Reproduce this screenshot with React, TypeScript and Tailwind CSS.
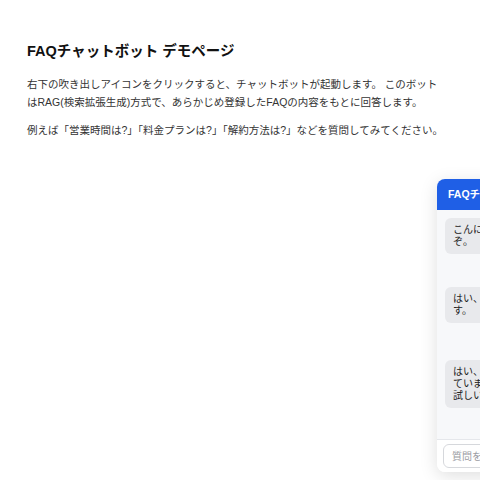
import React from "react";

const font = {
  fontFamily: '"Liberation Sans", "Noto Sans CJK JP", sans-serif',
};

type Msg = { lines: string[]; mt: string };

const messages: Msg[] = [
  { lines: ["こんにちは！FAQチャットボットです。ご質問をどう", "ぞ。"], mt: "mt-0" },
  { lines: ["はい、営業時間は平日10:00〜19:00で", "す。"], mt: "mt-[33px]" },
  {
    lines: [
      "はい、30日間の無料トライアルを用意し",
      "ていますので、まずはお気軽にお",
      "試しいただけます。",
    ],
    mt: "mt-[37px]",
  },
];

function ChatWidget() {
  return (
    <div className="absolute left-[437px] top-[179px] w-[280px] h-[293px] flex flex-col rounded-lg bg-white shadow-[0_4px_18px_rgba(0,0,0,0.13)] overflow-hidden">
      <div className="h-[31px] shrink-0 bg-[#1f5fe6] flex items-center px-[11px]">
        <span className="text-white font-bold text-[10.5px]">FAQチャットボット</span>
      </div>
      <div className="flex-1 bg-[#f7f8fa] px-[8px] pt-[8px] flex flex-col items-start">
        {messages.map((m, i) => (
          <div
            key={i}
            className={`${m.mt} bg-[#e8e9ec] rounded-md px-[8px] py-[6px] text-[10px] leading-[12px] text-[#222] whitespace-nowrap`}
          >
            {m.lines.map((l, j) => (
              <div key={j}>{l}</div>
            ))}
          </div>
        ))}
      </div>
      <div className="h-[33px] shrink-0 border-t border-[#e5e7eb] bg-white px-[6px] py-[4px] flex">
        <div className="flex-1 border border-[#d6d8dc] rounded-md flex items-center px-[8px] text-[10px] text-[#9a9ca3]">
          質問を入力してください...
        </div>
      </div>
    </div>
  );
}

export default function App() {
  return (
    <div className="relative w-full h-[480px] overflow-hidden bg-white" style={font}>
      <div className="pl-[27px] pt-[41px] w-[445px]">
        <h1 className="text-[14.5px] leading-[20px] font-bold text-[#111]">
          FAQチャットボット デモページ
        </h1>
        <p className="mt-[14px] text-[10.5px] leading-[18px] text-[#333]">
          右下の吹き出しアイコンをクリックすると、チャットボットが起動します。 このボット
          <br />
          はRAG(検索拡張生成)方式で、あらかじめ登録したFAQの内容をもとに回答します。
        </p>
        <p className="mt-[10px] text-[10.5px] leading-[18px] text-[#333]">
          例えば「営業時間は?」「料金プランは?」「解約方法は?」などを質問してみてください。
        </p>
      </div>
      <ChatWidget />
    </div>
  );
}
